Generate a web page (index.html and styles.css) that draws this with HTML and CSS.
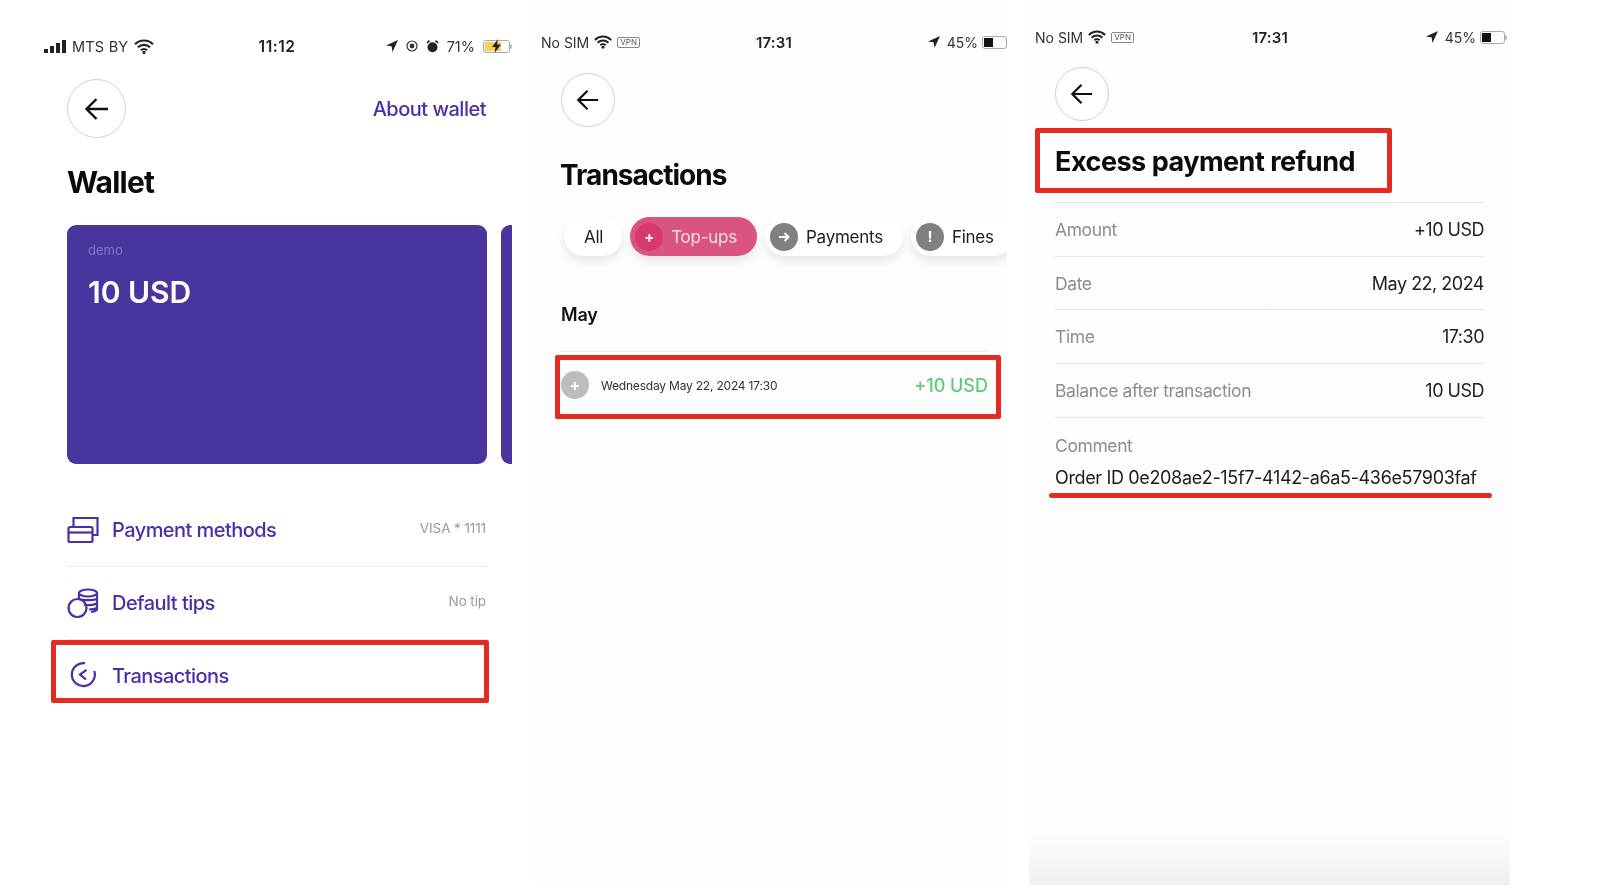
FILE: index.html
```html
<!DOCTYPE html>
<html>
<head>
  <title>Wallet screens</title>
  <link rel="stylesheet" href="styles.css">
</head>
<body>
  <svg class="sprites" width="0" height="0">
    <symbol id="back" viewBox="0 0 26 26">
      <path d="M24 13H2.5M12.5 3 2.5 13l10 10" fill="none" stroke="#111" stroke-width="2.4"/>
    </symbol>
    <symbol id="wifi" viewBox="0 0 20 15">
      <path d="M1 5.2a12.8 12.8 0 0 1 18 0M4 8.3a8.6 8.6 0 0 1 12 0M7 11.2a4.3 4.3 0 0 1 6 0" fill="none" stroke="#222" stroke-width="2.2"/>
      <circle cx="10" cy="13.4" r="1.6" fill="#222"/>
    </symbol>
    <symbol id="locate" viewBox="0 0 12 12">
      <path d="M12 0 0 5.5l5.6.8.9 5.7z" fill="#222"/>
    </symbol>
  </svg>

  <section class="screen screen-wallet">
    <div class="status status-wallet">
      <div class="status-left">
        <svg class="signal" width="22" height="13" viewBox="0 0 22 13"><path d="M0 9h4v4H0zM6 6h4v7H6zM12 3h4v10h-4zM18 0h4v13h-4z" fill="#222"/></svg>
        <span>MTS BY</span>
        <svg width="20" height="15"><use href="#wifi"/></svg>
      </div>
      <div class="status-time">11:12</div>
      <div class="status-right">
        <svg width="12" height="12"><use href="#locate"/></svg>
        <svg class="lock" width="12" height="12" viewBox="0 0 12 12"><circle cx="6" cy="6" r="5" fill="none" stroke="#333" stroke-width="1.2"/><circle cx="6" cy="6" r="2.4" fill="#333"/></svg>
        <svg class="alarm" width="13" height="13" viewBox="0 0 13 13"><circle cx="6.5" cy="7.3" r="5" fill="#222"/><path d="M1 3l2.5-2.4M12 3 9.500.6" stroke="#222" stroke-width="1.6"/></svg>
        <span>71%</span>
        <div class="battery">
          <div class="battery-fill battery-charging"></div>
          <svg class="bolt" width="9" height="14" viewBox="0 0 9 14"><path d="M6 0 0 8h3.500L2.500 14 9 5.500H5z" fill="#222"/></svg>
        </div>
      </div>
    </div>

    <div class="content">
      <div class="top-row">
        <div class="back back-large"><svg width="26" height="26"><use href="#back"/></svg></div>
        <a class="about-link">About wallet</a>
      </div>
      <h1 class="title title-wallet">Wallet</h1>

      <div class="cards">
        <div class="card">
          <div class="card-name">demo</div>
          <div class="card-sum">10 USD</div>
        </div>
        <div class="card"></div>
      </div>

      <div class="menu">
        <div class="menu-row">
          <svg class="menu-icon" width="32" height="28" viewBox="0 0 32 28" fill="none" stroke="#4a2fa8" stroke-width="2.200">
            <path d="M6.500 11V2h24v17h-5"/>
            <rect x="1.500" y="11" width="24" height="15" rx="1.500"/>
            <path d="M1.500 16.500h24"/>
          </svg>
          <span class="menu-label">Payment methods</span>
          <span class="menu-note">VISA * 1111</span>
        </div>
        <div class="menu-row">
          <svg class="menu-icon" width="32" height="30" viewBox="0 0 32 30" fill="none" stroke="#4a2fa8" stroke-width="2.200">
            <ellipse cx="21" cy="5" rx="9" ry="3.500"/>
            <path d="M12 5v6M30 5v16c0 1.500-2 2.500-6 3M12 11c3 1.500 14 1.500 18 0M17 16.500c4 .8 10 .5 13-1M22 21.500c3 0 6-.5 8-1.500"/>
            <circle cx="10.500" cy="20" r="9"/>
          </svg>
          <span class="menu-label">Default tips</span>
          <span class="menu-note">No tip</span>
        </div>
        <div class="menu-row menu-row-last">
          <svg class="menu-icon" width="32" height="28" viewBox="0 0 32 28" fill="none" stroke="#4a2fa8" stroke-width="2.200">
            <path d="M18 1.200A11.500 11.500 0 1 0 27.300 9"/>
            <path d="M19.500 7.800 13 12.500l6 5"/>
          </svg>
          <span class="menu-label">Transactions</span>
          <div class="mark mark-menu"></div>
        </div>
      </div>
    </div>
  </section>

  <section class="screen screen-list">
    <div class="status status-list">
      <div class="status-left">
        <span>No SIM</span>
        <svg width="18" height="14"><use href="#wifi"/></svg>
        <span class="vpn">VPN</span>
      </div>
      <div class="status-time">17:31</div>
      <div class="status-right">
        <svg class="status-arrow" width="12" height="12"><use href="#locate"/></svg>
        <span>45%</span>
        <div class="battery"><div class="battery-fill battery-half"></div></div>
      </div>
    </div>

    <div class="content">
      <div class="back"><svg width="24" height="24"><use href="#back"/></svg></div>
      <h1 class="title title-list">Transactions</h1>
    </div>

    <div class="chips">
      <div class="chip">All</div>
      <div class="chip chip-on"><span class="chip-dot chip-dot-on">+</span>Top-ups</div>
      <div class="chip"><span class="chip-dot">
        <svg width="12" height="12" viewBox="0 0 12 12"><path d="M1 6h9M6.500 2 10.500 6l-4 4" fill="none" stroke="#fff" stroke-width="2"/></svg>
      </span>Payments</div>
      <div class="chip"><span class="chip-dot">!</span>Fines</div>
    </div>

    <div class="content">
      <h2 class="month">May</h2>
      <div class="tx-row">
        <span class="tx-dot">+</span>
        <span class="tx-date">Wednesday May 22, 2024 17:30</span>
        <span class="tx-sum">+10 USD</span>
        <div class="mark mark-tx"></div>
      </div>
    </div>
  </section>

  <section class="screen screen-detail">
    <div class="status status-detail">
      <div class="status-left">
        <span>No SIM</span>
        <svg width="18" height="14"><use href="#wifi"/></svg>
        <span class="vpn">VPN</span>
      </div>
      <div class="status-time">17:31</div>
      <div class="status-right">
        <svg class="status-arrow" width="12" height="12"><use href="#locate"/></svg>
        <span>45%</span>
        <div class="battery"><div class="battery-fill battery-half"></div></div>
      </div>
    </div>

    <div class="content">
      <div class="back"><svg width="24" height="24"><use href="#back"/></svg></div>
      <div class="title-wrap">
        <h1 class="title title-detail">Excess payment refund</h1>
        <div class="mark mark-title"></div>
      </div>

      <div class="details">
        <div class="detail-row"><span class="detail-key">Amount</span><span>+10 USD</span></div>
        <div class="detail-row"><span class="detail-key">Date</span><span>May 22, 2024</span></div>
        <div class="detail-row"><span class="detail-key">Time</span><span>17:30</span></div>
        <div class="detail-row"><span class="detail-key">Balance after transaction</span><span>10 USD</span></div>
        <div class="comment">
          <div class="detail-key">Comment</div>
          <div class="comment-text">Order ID 0e208ae2-15f7-4142-a6a5-436e57903faf</div>
          <div class="underline"></div>
        </div>
      </div>
    </div>
  </section>
</body>
</html>
```

FILE: styles.css
```css
body {
  margin: 0;
  height: 896px;
  overflow: hidden;
  background: #fff;
  display: flex;
  padding-left: 30px;
  box-sizing: border-box;
  font-family: Inter, "Liberation Sans", sans-serif;
  color: #222;
}

.sprites {
  position: absolute;
}

.screen {
  height: 885px;
  box-sizing: border-box;
  overflow: hidden;
  filter: blur(0.4px);
}

.screen-wallet {
  width: 482px;
  padding-top: 34px;
}

.screen-list {
  width: 472px;
  margin-left: 23px;
  padding-top: 30px;
  background: #fdfdfd;
}

.screen-detail {
  width: 481px;
  margin-left: 22px;
  padding-top: 25px;
  background: linear-gradient(#fefefe 0, #fdfdfd 94%, #f0f0f0 100%);
}

/* status bars */
.status {
  height: 24px;
  display: grid;
  grid-template-columns: 1fr auto 1fr;
  align-items: center;
  font-size: 14px;
  color: #333;
}

.status-wallet {
  margin: 0 2px 0 14px;
}

.status-list {
  margin: 0 0 0 6px;
}

.status-detail {
  margin: 0 5px 0 6px;
}

.status-left,
.status-right {
  display: flex;
  align-items: center;
  gap: 5px;
}

.status-right {
  justify-content: flex-end;
  gap: 4px;
}

.status-arrow {
  margin-right: 3px;
}

.status-time {
  font-size: 15px;
  font-weight: 600;
  letter-spacing: 0.2px;
  color: #222;
}

.status-wallet .status-time {
  font-size: 15.5px;
  letter-spacing: 0.5px;
}

.status-wallet .status-left {
  gap: 6px;
  font-size: 14.5px;
  letter-spacing: 0.2px;
}

.status-wallet .status-right {
  gap: 8px;
  font-size: 14.5px;
}

.vpn {
  font-size: 8px;
  line-height: 9px;
  padding: 0 2px;
  border: 1px solid #888;
  border-radius: 2px;
  color: #555;
}

.battery {
  position: relative;
  width: 21px;
  height: 9px;
  border: 1px solid #aaa;
  border-radius: 3px;
  padding: 1px;
  box-sizing: content-box;
}

.battery::after {
  content: '';
  position: absolute;
  right: -3px;
  top: 3px;
  width: 2px;
  height: 5px;
  border-radius: 0 2px 2px 0;
  background: #bbb;
}

.screen-wallet .battery {
  width: 23px;
}

.battery-fill {
  height: 100%;
}

.battery-half {
  width: 45%;
  background: #111;
}

.battery-charging {
  width: 71%;
  background: #f6d24d;
}

.bolt {
  position: absolute;
  left: 8px;
  top: -2px;
}

/* shared bits */
.content {
  padding: 0 19px 0 26px;
}

.screen-wallet .content {
  padding: 0 0 0 37px;
}

.screen-detail .content {
  padding: 0 26px;
}

.top-row {
  display: flex;
  justify-content: space-between;
  align-items: center;
  width: 419px;
  margin-top: 21px;
}

.back {
  width: 52px;
  height: 52px;
  border: 1px solid #cfcfcf;
  border-radius: 50%;
  display: flex;
  justify-content: center;
  align-items: center;
  background: #fff;
}

.back-large {
  width: 57px;
  height: 57px;
}

.screen-list .back {
  margin-top: 19px;
}

.screen-detail .back {
  margin-top: 18px;
}

.about-link {
  font-size: 20px;
  font-weight: 500;
  letter-spacing: -0.5px;
  color: #4a2fa8;
}

.title {
  margin: 0;
  line-height: 36px;
  font-weight: 700;
  color: #0b0b0b;
}

.title-wallet {
  margin-top: 26px;
  font-size: 30px;
  letter-spacing: -0.8px;
}

.title-list {
  margin: 30px 0 0 -1px;
  font-size: 28px;
  letter-spacing: -1px;
}

.title-detail {
  font-size: 27px;
  letter-spacing: -0.5px;
}

.mark {
  position: absolute;
  border: 5px solid #e32b22;
  border-radius: 2px;
}

/* wallet */
.cards {
  display: flex;
  gap: 14px;
  margin-top: 25px;
}

.card {
  flex: 0 0 420px;
  height: 239px;
  box-sizing: border-box;
  padding: 17px 21px;
  background: #4a359f;
  border-radius: 9px;
  color: #fff;
}

.card-name {
  font-size: 13px;
  color: #8070d2;
}

.card-sum {
  margin-top: 16px;
  font-size: 30px;
  font-weight: 600;
}

.menu {
  width: 420px;
  margin-top: 30px;
}

.menu-row {
  position: relative;
  height: 73px;
  box-sizing: border-box;
  display: flex;
  align-items: center;
  border-bottom: 1px solid #e6e8ea;
}

.menu-row-last {
  height: 71px;
  border-bottom: 0;
}

.menu-icon {
  margin-right: 13px;
  flex: none;
}

.menu-label {
  flex: 1;
  font-size: 20px;
  font-weight: 500;
  letter-spacing: -0.55px;
  color: #4a2fa8;
}

.menu-note {
  font-size: 13.5px;
  letter-spacing: -0.1px;
  color: #9a9a9a;
  margin: -4px 1px 0 0;
}

.mark-menu {
  top: 0;
  bottom: 8px;
  left: -16px;
  right: -2px;
}

/* transactions */
.chips {
  display: flex;
  gap: 8px;
  margin-top: 24px;
  padding: 0 0 12px 29px;
  overflow: hidden;
}

.chip {
  flex: none;
  height: 39px;
  display: flex;
  align-items: center;
  padding: 0 20px 0 5px;
  border-radius: 20px;
  background: #fff;
  box-shadow: 0 5px 10px rgba(0, 0, 0, 0.09);
  font-size: 17px;
  letter-spacing: -0.25px;
}

.chip:first-child {
  padding: 0 19px 0 20px;
}

.chip-on {
  background: #d9547f;
  color: #fbdde6;
}

.chip-dot {
  width: 28px;
  height: 28px;
  margin-right: 8px;
  border-radius: 50%;
  background: #808080;
  color: #fff;
  font-weight: 700;
  font-size: 15px;
  display: flex;
  justify-content: center;
  align-items: center;
}

.chip-dot-on {
  background: #d63a6c;
}

.month {
  margin: 35px 0 0;
  font-size: 18px;
  line-height: 24px;
  font-weight: 600;
  letter-spacing: -0.2px;
  color: #111;
}

.tx-row {
  position: relative;
  height: 67px;
  margin-top: 24px;
  box-sizing: border-box;
  display: flex;
  align-items: center;
  border-top: 1px solid #ececec;
}

.tx-dot {
  width: 28px;
  height: 28px;
  margin-right: 12px;
  border-radius: 50%;
  background: #bdbdbd;
  color: #fff;
  font-weight: 700;
  font-size: 16px;
  display: flex;
  justify-content: center;
  align-items: center;
}

.tx-date {
  flex: 1;
  font-size: 12px;
  letter-spacing: -0.2px;
  color: #333;
}

.tx-sum {
  font-size: 18px;
  font-weight: 500;
  color: #5ecb76;
}

.mark-tx {
  top: 3px;
  bottom: -1px;
  left: -6px;
  right: -13px;
}

/* refund details */
.title-wrap {
  position: relative;
  width: 298px;
  margin-top: 23px;
  white-space: nowrap;
}

.mark-title {
  top: -16px;
  bottom: -13px;
  left: -20px;
  right: -39px;
}

.details {
  margin-top: 22px;
  border-top: 1px solid #e4e4e4;
  font-size: 18px;
  letter-spacing: -0.5px;
}

.detail-row {
  height: 53.7px;
  box-sizing: border-box;
  display: flex;
  justify-content: space-between;
  align-items: center;
  border-bottom: 1px solid #e4e4e4;
}

.detail-key {
  font-size: 17.5px;
  letter-spacing: -0.4px;
  color: #8d8d8d;
}

.comment {
  position: relative;
  padding-top: 17px;
  line-height: 22px;
}

.comment-text {
  margin-top: 10px;
  white-space: nowrap;
  letter-spacing: -0.35px;
  color: #1c1c1c;
}

.underline {
  position: absolute;
  left: -6px;
  right: -8px;
  bottom: -9px;
  height: 5px;
  border-radius: 3px;
  background: #e32b22;
}
```
